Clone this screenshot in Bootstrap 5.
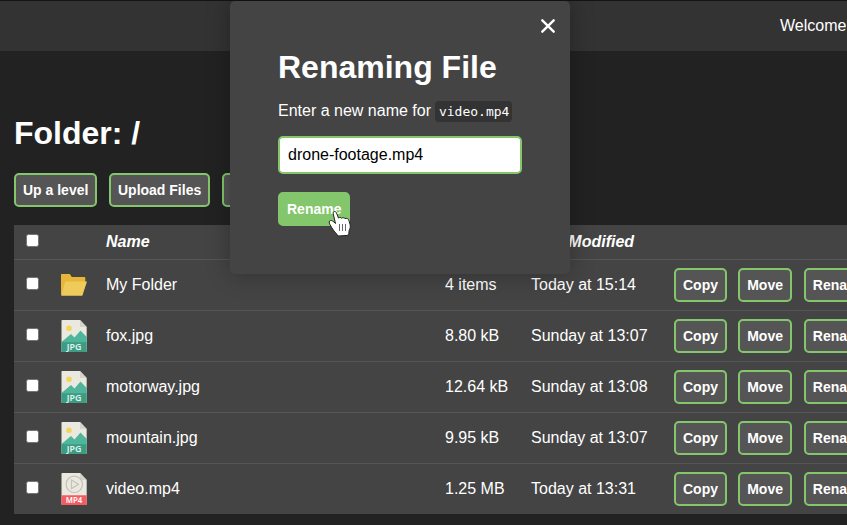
<!DOCTYPE html>
<html lang="en">
<head>
<meta charset="utf-8">
<title>File Manager</title>
<meta name="viewport" content="width=device-width, initial-scale=1">
<link href="https://cdn.jsdelivr.net/npm/bootstrap@5.3.0/dist/css/bootstrap.min.css" rel="stylesheet">
<style>
body{font-family:"Liberation Sans",Arial,sans-serif;font-size:16px;line-height:1.5;background:#222;color:#fff;height:525px}
.topbar{height:51px;background:#333;border-top:1px solid #141414;padding-left:780px}
.files-page{width:1010px;padding:62px 0 0 14px}
h1{font-size:32px;font-weight:700;line-height:40px}
.tool{height:34px;padding:0 7px;border:2px solid #83c66b;border-radius:5px;background:#555;color:#fff;font-size:14px;font-weight:700;line-height:30px}
.tool:hover{background:#83c66b;border-color:#83c66b;color:#fff}
.tool-solid{background:#83c66b}
.toolbar-row{gap:11.6px;margin:20px 0 18px}
.row-actions{gap:11.2px}
.row-actions .tool:last-child{margin-left:.6px}
.files{table-layout:fixed;width:996px;background:#444;color:#fff}
.files th,.files td{padding:0 12px;vertical-align:middle;white-space:nowrap}
.files tr{height:51px}
.files thead th{font-style:italic}
.files tr+tr td,.files tbody tr:first-child td{border-top:1px solid #565656}
.files thead tr{height:34px}
.files input{appearance:none;display:block;width:13px;height:13px;margin:0;background:#fff;border:1px solid #767676;border-radius:2.5px;position:relative;top:-1px}
.files svg{display:block;position:relative;top:1px}
.files svg.folder-icon{top:0}
.dialog{left:230px;top:1px;width:340px;height:273px;padding:46px 48px 0;background:#444;border-radius:5px;box-shadow:0 0 24px rgba(0,0,0,.3)}
.dialog h2{font-size:32px;font-weight:700;line-height:40px;margin:0 0 12px}
.dialog p{line-height:24px;margin:0 0 13px;white-space:nowrap}
.dialog code{font:13px/19px "DejaVu Sans Mono",monospace;color:#fff;background:#333;border-radius:4px;padding:3px 3px 3px 3.5px}
.dialog input{height:38px;border:2px solid #83c66b;border-radius:5px;padding:0 8px;color:#000;font-size:16px;margin-bottom:18px}
.dismiss{right:14px;top:17px;line-height:0}
.pointer{left:328px;top:210px}
</style>
<script src="https://cdn.jsdelivr.net/npm/bootstrap@5.3.0/dist/js/bootstrap.bundle.min.js"></script>
</head>
<body class="overflow-hidden position-relative">
<svg width="0" height="0" class="position-absolute">
  <defs>
    <symbol id="jpg" viewBox="0 0 27 33">
      <path d="M2.300 0H20l6.700 7v24.200q0 .8-.8.800H2.300q-.8 0-.8-.8V.8q0-.8.8-.8z" fill="#e9e9e0"/>
      <path d="M20 0v7h6.700z" fill="#d5d3ca"/>
      <circle cx="9" cy="8.300" r="2.800" fill="#f3d55b"/>
      <path d="M1.500 22L11 14l3.500 3.500 6-7 6.200 6.500v6H1.500z" fill="#4fb59b"/>
      <path d="M1.500 22.200h25.200v9q0 .8-.8.800H2.300q-.8 0-.8-.8z" fill="#3c9d84"/>
      <text x="14.100" y="30.300" text-anchor="middle" font-family="Noto Sans, sans-serif" font-size="8.500" font-weight="600" textLength="14.500" lengthAdjust="spacingAndGlyphs" fill="#e4f3ee">JPG</text>
    </symbol>
    <symbol id="mp4" viewBox="0 0 27 33">
      <path d="M2.300 0H20l6.700 7v24.200q0 .8-.8.800H2.300q-.8 0-.8-.8V.8q0-.8.8-.8z" fill="#e9e9e0"/>
      <path d="M20 0v7h6.700z" fill="#d5d3ca"/>
      <circle cx="14.300" cy="11.300" r="8.200" fill="none" stroke="#c9c0b8" stroke-width="1.200"/>
      <path d="M11.500 7v8.600l7-4.300z" fill="none" stroke="#c9c0b8" stroke-width="1.200"/>
      <path d="M1.500 22.200h25.200v9q0 .8-.8.800H2.300q-.8 0-.8-.8z" fill="#f25c62"/>
      <text x="14.100" y="30.300" text-anchor="middle" font-family="Noto Sans, sans-serif" font-size="8.500" font-weight="600" textLength="16.500" lengthAdjust="spacingAndGlyphs" fill="#fff">MP4</text>
    </symbol>
    <symbol id="folder" viewBox="0 0 27 22">
      <path d="M1.800 0h8l2 3H24.500q.8 0 .8.800v4l-3 13H1.500Q1 21 1 20V.8Q1 0 1.800 0z" fill="#e8b638"/>
      <path d="M5.200 7.500H27l-4.500 13.700q-.3.600-1 .600H1.200z" fill="#eecb5a"/>
    </symbol>
  </defs>
</svg>
<nav class="topbar d-flex align-items-center"><span>Welcome</span></nav>
<main class="files-page">
  <h1 class="m-0">Folder: /</h1>
  <div class="toolbar-row d-flex">
    <button class="tool">Up a level</button>
    <button class="tool">Upload Files</button>
    <button class="tool">Create Folder</button>
  </div>
  <table class="files">
    <colgroup><col style="width:34px"><col style="width:46px"><col style="width:339px"><col style="width:86px"><col style="width:143px"><col></colgroup>
    <thead><tr><th><input type="checkbox"></th><th></th><th>Name</th><th>Size</th><th>Last Modified</th><th></th></tr></thead>
    <tbody>
      <tr><td><input type="checkbox"></td><td><svg class="folder-icon" width="27" height="22"><use href="#folder"/></svg></td><td>My Folder</td><td>4 items</td><td>Today at 15:14</td><td><div class="row-actions d-flex"><button class="tool">Copy</button><button class="tool">Move</button><button class="tool">Rename</button></div></td></tr>
      <tr><td><input type="checkbox"></td><td><svg width="27" height="33"><use href="#jpg"/></svg></td><td>fox.jpg</td><td>8.80 kB</td><td>Sunday at 13:07</td><td><div class="row-actions d-flex"><button class="tool">Copy</button><button class="tool">Move</button><button class="tool">Rename</button></div></td></tr>
      <tr><td><input type="checkbox"></td><td><svg width="27" height="33"><use href="#jpg"/></svg></td><td>motorway.jpg</td><td>12.64 kB</td><td>Sunday at 13:08</td><td><div class="row-actions d-flex"><button class="tool">Copy</button><button class="tool">Move</button><button class="tool">Rename</button></div></td></tr>
      <tr><td><input type="checkbox"></td><td><svg width="27" height="33"><use href="#jpg"/></svg></td><td>mountain.jpg</td><td>9.95 kB</td><td>Sunday at 13:07</td><td><div class="row-actions d-flex"><button class="tool">Copy</button><button class="tool">Move</button><button class="tool">Rename</button></div></td></tr>
      <tr><td><input type="checkbox"></td><td><svg width="27" height="33"><use href="#mp4"/></svg></td><td>video.mp4</td><td>1.25 MB</td><td>Today at 13:31</td><td><div class="row-actions d-flex"><button class="tool">Copy</button><button class="tool">Move</button><button class="tool">Rename</button></div></td></tr>
    </tbody>
  </table>
</main>
<section class="dialog position-absolute">
  <span class="dismiss position-absolute"><svg width="16" height="16" viewBox="0 0 16 16"><path d="M2.300 2.300l11.400 11.400M13.700 2.300L2.300 13.700" stroke="#fff" stroke-width="2.400" stroke-linecap="round"/></svg></span>
  <h2>Renaming File</h2>
  <p>Enter a new name for <code>video.mp4</code></p>
  <input type="text" class="w-100 d-block" value="drone-footage.mp4">
  <button class="tool tool-solid">Rename</button>
</section>
<svg class="pointer position-absolute" width="24" height="27" viewBox="0 0 24 27">
  <path d="M5.200 3.700c-.3-1.400.5-2.200 1.400-2.200 1 0 1.600.6 1.900 1.500l2 5c1-.8 2.300-.7 3.100.2 1.200-.9 2.600-.6 3.400.4 1.700-.7 3.300 0 3.800 1.600l1.200 4c.6 2.400.3 4.300-.9 6.400l-.3 3-1 1.800-9.800.6-1.500-2.200C6.400 22 4.200 18.500 2 14.600.8 12.600 1 11 2.300 10.600c1.400-.4 3 .6 5.200 2.900z" fill="#fff" stroke="#222" stroke-width="1"/>
  <path d="M11.500 14v7M14.500 14v7M17.500 14v7" stroke="#666" stroke-width="1"/>
</svg>
</body>
</html>
